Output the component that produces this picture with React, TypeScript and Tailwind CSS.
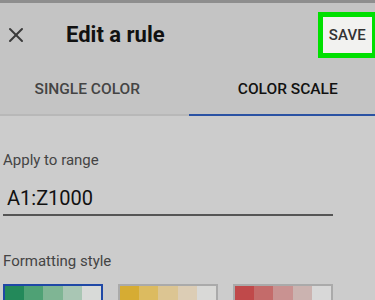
import { X } from "lucide-react";

const scales = [
  { selected: true, colors: ["#23895a", "#4fa175", "#7fb594", "#a9c6b4", "#d8dad8"] },
  { selected: false, colors: ["#d6ac33", "#dcbb60", "#dcc592", "#dccdb5", "#d9d9d7"] },
  { selected: false, colors: ["#c0494a", "#c46b6a", "#c99291", "#cbb3b0", "#d8d8d8"] },
];

export default function App() {
  return (
    <div className="h-[300px] w-[375px] overflow-hidden bg-[#cccccc] font-['Roboto',sans-serif]">
      <div className="h-[3px] bg-[#8e8e8e]" />

      {/* Header */}
      <div className="bg-[#c4c4c4]">
        <div className="flex h-[63px] items-center">
          <X className="ml-[4px] h-[24px] w-[24px] text-[#3a3a3a]" strokeWidth={2} />
          <h1 className="ml-[38px] text-[22px] font-bold text-[#111]">Edit a rule</h1>
          <div className="ml-auto mr-[-2px] border-[5px] border-[#00e000] bg-[#f2f2f0] px-[6px] py-[6px]">
            <span className="text-[15px] font-medium tracking-[0.2px] text-[#333]">SAVE</span>
          </div>
        </div>

        {/* Tabs */}
        <div className="flex h-[50px]">
          <div className="flex flex-1 items-center justify-center border-b-[2px] border-[#b8b8b8] pr-[14px]">
            <span className="text-[15.5px] font-medium text-[#444]">SINGLE COLOR</span>
          </div>
          <div className="flex flex-1 items-center justify-center border-b-[2px] border-[#2a52a3] pl-[12px]">
            <span className="text-[15.5px] font-medium text-[#111]">COLOR SCALE</span>
          </div>
        </div>
      </div>

      {/* Content */}
      <div className="px-[3px] pt-[33px]">
        <p className="text-[15px] text-[#444]">Apply to range</p>
        <div className="mt-[11px] w-[330px] border-b-[2px] border-[#555] pb-[1px] pl-[4px]">
          <span className="text-[20px] text-[#111]">A1:Z1000</span>
        </div>

        <p className="mt-[34px] text-[15px] text-[#444]">Formatting style</p>
        <div className="mt-[12px] flex gap-[15px]">
          {scales.map((s, i) => (
            <div
              key={i}
              className={
                s.selected
                  ? "flex h-[30px] w-[100px] border-[2px] border-[#1f48a6]"
                  : "flex h-[30px] w-[100px] border-[2px] border-[#aaaaaa]"
              }
            >
              {s.colors.map((c) => (
                <div key={c} className="flex-1" style={{ backgroundColor: c }} />
              ))}
            </div>
          ))}
        </div>
      </div>
    </div>
  );
}
